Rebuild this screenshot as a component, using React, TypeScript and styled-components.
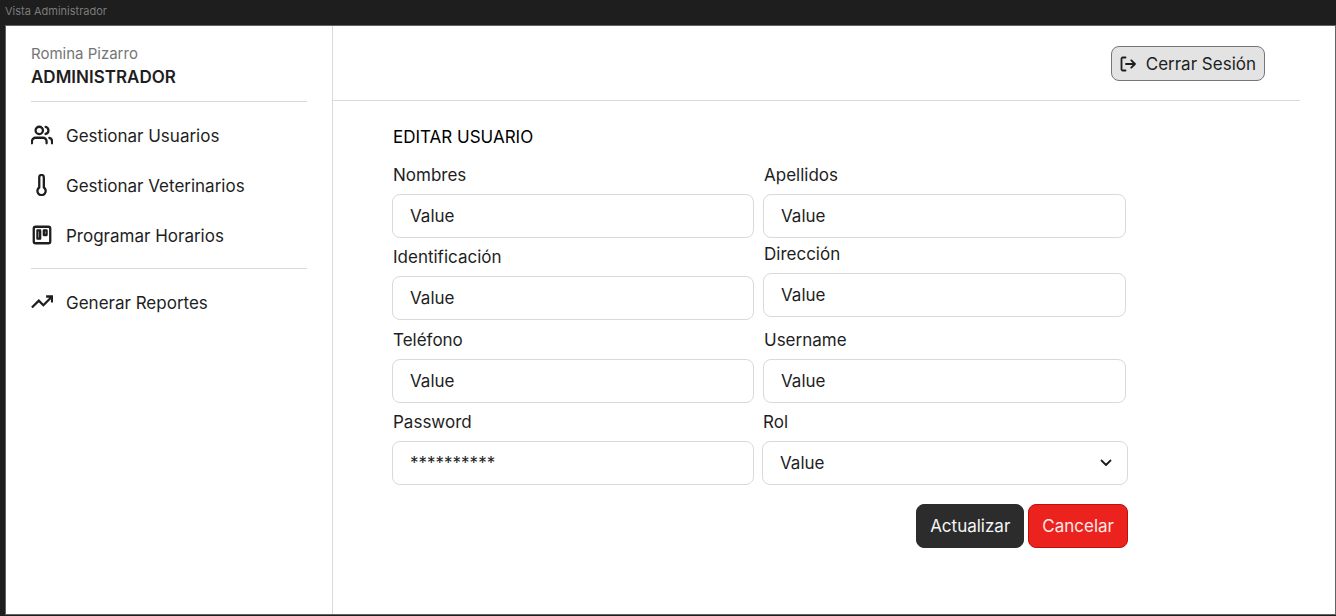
import React, { useId, useState } from "react";
import styled, { createGlobalStyle } from "styled-components";

const GlobalStyle = createGlobalStyle`
  *, *::before, *::after { box-sizing: border-box; }
  body {
    margin: 0;
    background: #1e1e1e;
    color: #1e1e1e;
    font-family: Inter, "Liberation Sans", sans-serif;
    font-size: 17px;
    line-height: 24px;
  }
  button, input, select { font: inherit; color: inherit; }
`;

const Page = styled.div`
  display: flex;
  flex-direction: column;
  min-height: 100vh;
  padding: 0 0 1px 5px;
`;

const FrameTitle = styled.div`
  height: 25px;
  font-size: 11px;
  line-height: 23px;
  color: #7c7c7c;
`;

const Frame = styled.div`
  flex: 1;
  display: flex;
  background: #fff;
  border: 1px solid #626262;
`;

const Sidebar = styled.aside`
  flex: none;
  width: 327px;
  padding: 17px 25px;
  border-right: 1px solid #d9d9d9;
`;

const Profile = styled.header`
  padding-bottom: 12px;
  border-bottom: 1px solid #d9d9d9;
`;

const UserName = styled.div`
  font-size: 15px;
  line-height: 22px;
  color: #757575;
`;

const RoleName = styled.div`
  font-weight: 600;
`;

const NavList = styled.ul<{ $divided?: boolean }>`
  display: flex;
  flex-direction: column;
  gap: 26px;
  margin: 0;
  padding: 22px 0 20px;
  list-style: none;
  border-bottom: ${(p) => (p.$divided ? "1px solid #d9d9d9" : "none")};
`;

const NavLink = styled.a`
  display: flex;
  align-items: flex-start;
  gap: 13px;
  color: inherit;
  text-decoration: none;
`;

const Icon = styled.svg`
  flex: none;
  display: block;
  fill: none;
  stroke: currentColor;
  stroke-linecap: round;
  stroke-linejoin: round;
`;

const Main = styled.main`
  flex: 1;
  min-width: 0;
`;

const TopBar = styled.div`
  display: flex;
  justify-content: flex-end;
  margin-right: 35px;
  padding: 20px 35px 19px 0;
  border-bottom: 1px solid #d9d9d9;
`;

const Button = styled.button<{ $tone: "neutral" | "dark" | "danger" }>`
  display: flex;
  align-items: center;
  gap: 10px;
  padding: ${(p) => (p.$tone === "neutral" ? "5px 8px 4px" : "9px 13px")};
  border: 1px solid;
  border-radius: 8px;
  cursor: pointer;
  ${(p) =>
    ({
      neutral: "background: #e3e3e3; border-color: #767676; color: #1e1e1e;",
      dark: "background: #2c2c2c; border-color: #2c2c2c; color: #f5f5f5;",
      danger: "background: #ec221f; border-color: #c00f0c; color: #fee9e7;",
    })[p.$tone]}
`;

const Form = styled.form`
  padding: 24px 207px 24px 59px;
`;

const FormTitle = styled.h1`
  margin: 0;
  padding-left: 1px;
  font-size: 17px;
  font-weight: 400;
  color: #000;
`;

const Columns = styled.div`
  display: grid;
  grid-template-columns: 362fr 366fr;
  gap: 8px;
  margin-top: 14px;
`;

const Column = styled.div<{ $gap: number }>`
  display: flex;
  flex-direction: column;
  gap: ${(p) => p.$gap}px;
`;

const FieldBox = styled.div<{ $inset?: boolean }>`
  display: flex;
  flex-direction: column;
  gap: 7px;
  padding: ${(p) => (p.$inset ? "0 2px 0 1px" : "0")};
`;

const Label = styled.label`
  align-self: flex-start;
  padding-left: 1px;
`;

const Input = styled.input`
  width: 100%;
  height: 44px;
  padding: 0 17px;
  border: 1px solid #d9d9d9;
  border-radius: 8px;
  background: #fff;
`;

const SelectBox = styled.div`
  display: grid;
  align-items: center;
  > * { grid-area: 1 / 1; }
  > svg { justify-self: end; margin-right: 14px; pointer-events: none; }
`;

const Select = styled(Input).attrs({ as: "select" })`
  appearance: none;
`;

const Actions = styled.div`
  display: flex;
  justify-content: flex-end;
  gap: 4px;
  margin-top: 19px;
`;

type FieldProps = { label: string; initial?: string; inset?: boolean };

function Field({ label, initial = "Value", inset }: FieldProps) {
  const id = useId();
  const [value, setValue] = useState(initial);
  return (
    <FieldBox $inset={inset}>
      <Label htmlFor={id}>{label}</Label>
      <Input id={id} type="text" value={value} onChange={(e) => setValue(e.target.value)} />
    </FieldBox>
  );
}

function NavIcon({ children }: { children: React.ReactNode }) {
  return (
    <Icon width="22" height="22" viewBox="0 0 24 24" strokeWidth="2.5" aria-hidden="true">
      {children}
    </Icon>
  );
}

export default function App() {
  return (
    <>
      <GlobalStyle />
      <Page>
        <FrameTitle>Vista Administrador</FrameTitle>
        <Frame>
          <Sidebar>
            <Profile>
              <UserName>Romina Pizarro</UserName>
              <RoleName>ADMINISTRADOR</RoleName>
            </Profile>
            <nav>
              <NavList $divided>
                <li>
                  <NavLink href="#usuarios">
                    <NavIcon>
                      <path d="M17 21v-2a4 4 0 0 0-4-4H5a4 4 0 0 0-4 4v2" />
                      <circle cx="9" cy="7" r="4" />
                      <path d="M23 21v-2a4 4 0 0 0-3-3.87M16 3.13a4 4 0 0 1 0 7.75" />
                    </NavIcon>
                    Gestionar Usuarios
                  </NavLink>
                </li>
                <li>
                  <NavLink href="#veterinarios">
                    <NavIcon>
                      <path d="M14 14.76V3.5a2.5 2.5 0 0 0-5 0v11.26a4.5 4.5 0 1 0 5 0z" />
                    </NavIcon>
                    Gestionar Veterinarios
                  </NavLink>
                </li>
                <li>
                  <NavLink href="#horarios">
                    <NavIcon>
                      <rect x="3" y="3" width="18" height="18" rx="2" />
                      <rect x="7" y="7" width="3" height="9" />
                      <rect x="14" y="7" width="3" height="5" />
                    </NavIcon>
                    Programar Horarios
                  </NavLink>
                </li>
              </NavList>
              <NavList>
                <li>
                  <NavLink href="#reportes">
                    <NavIcon>
                      <g strokeLinecap="butt" strokeLinejoin="miter">
                        <path d="M23 6l-9.500 9.500-5-5L1 18M16.500 6H23v6.500" />
                      </g>
                    </NavIcon>
                    Generar Reportes
                  </NavLink>
                </li>
              </NavList>
            </nav>
          </Sidebar>
          <Main>
            <TopBar>
              <Button type="button" $tone="neutral">
                <Icon width="16" height="16" viewBox="0 0 16 16" strokeWidth="1.8" aria-hidden="true">
                  <path d="M5.5 14.500H2.800A1.300 1.300 0 0 1 1.500 13.200V2.800A1.300 1.300 0 0 1 2.800 1.500H5.500M11.300 11.700L15 8L11.300 4.300M15 8H6" />
                </Icon>
                Cerrar Sesión
              </Button>
            </TopBar>
            <Form onSubmit={(e) => e.preventDefault()}>
              <FormTitle>EDITAR USUARIO</FormTitle>
              <Columns>
                <Column $gap={8}>
                  <Column $gap={7}>
                    <Field label="Nombres" />
                    <Field label="Identificación" />
                  </Column>
                  <Column $gap={7}>
                    <Field label="Teléfono" />
                    <Field label="Password" initial="**********" />
                  </Column>
                </Column>
                <Column $gap={11}>
                  <Column $gap={4}>
                    <Field label="Apellidos" inset />
                    <Field label="Dirección" inset />
                  </Column>
                  <Column $gap={7}>
                    <Field label="Username" inset />
                    <FieldBox>
                      <Label htmlFor="rol">Rol</Label>
                      <SelectBox>
                        <Select id="rol">
                          <option>Value</option>
                        </Select>
                        <Icon width="16" height="16" viewBox="0 0 16 16" strokeWidth="1.8" aria-hidden="true">
                          <path d="M3.500 5.500L8 10L12.500 5.500" />
                        </Icon>
                      </SelectBox>
                    </FieldBox>
                  </Column>
                </Column>
              </Columns>
              <Actions>
                <Button type="submit" $tone="dark">Actualizar</Button>
                <Button type="button" $tone="danger">Cancelar</Button>
              </Actions>
            </Form>
          </Main>
        </Frame>
      </Page>
    </>
  );
}
